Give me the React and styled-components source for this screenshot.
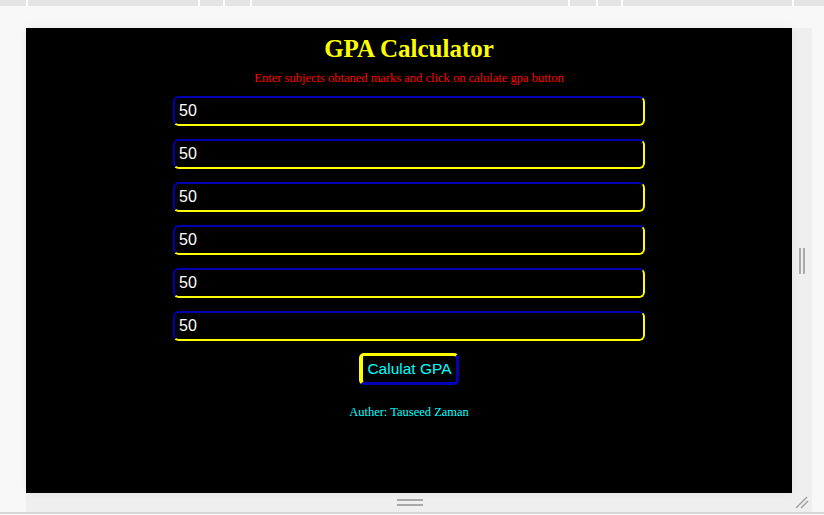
import React from 'react';
import styled, { createGlobalStyle } from 'styled-components';

const GlobalStyle = createGlobalStyle`
    html, body {
        margin: 0;
        padding: 0;
        background: #f8f8f8;
        overflow: hidden;
    }
`;

const TopBar = styled.div`
    display: flex;
    height: 6px;
    background: #e4e4e4;
`;

const Segment = styled.div`
    width: ${props => props.$w}px;
    flex-shrink: 0;
`;

const Tick = styled.div`
    width: 2px;
    background: #ffffff;
`;

const Workspace = styled.div`
    padding: 22px 0 0 26px;
`;

const Frame = styled.div`
    display: grid;
    grid-template-columns: 766px 20px;
    grid-template-rows: 465px 19px;
    width: 786px;
    background: #efefef;
`;

const Panel = styled.div`
    display: flex;
    flex-direction: column;
    align-items: center;
    padding-top: 7px;
    background: #000;
    box-shadow: 0 0 10px rgba(0, 0, 0, 0.05);
`;

const Title = styled.h1`
    margin: 0;
    font-family: "Liberation Serif", serif;
    font-size: 25px;
    line-height: 28px;
    font-weight: bold;
    color: #ffff00;
`;

const Subtitle = styled.p`
    margin: 7px 0 0;
    font-family: "Liberation Serif", serif;
    font-size: 12.5px;
    line-height: 16px;
    color: #ff0000;
`;

const Fields = styled.div`
    display: flex;
    flex-direction: column;
    gap: 13px;
    margin-top: 10px;
`;

const MarkInput = styled.input`
    box-sizing: border-box;
    width: 472px;
    height: 30px;
    padding: 0 4px;
    border: 2px solid;
    border-color: #0000b4 #ffff00 #ffff00 #0000b4;
    border-radius: 6px;
    background: #000;
    color: #fff;
    font-family: "Liberation Sans", Arial, sans-serif;
    font-size: 16px;
    outline: none;
`;

const CalcButton = styled.button`
    box-sizing: border-box;
    margin-top: 12px;
    width: 100px;
    height: 32px;
    padding: 0;
    border: 3px solid;
    border-color: #ffff00 #0000b4 #0000b4 #ffff00;
    border-width: 3px 3px 3px 4px;
    border-radius: 5px;
    background: #000;
    color: #00ffff;
    font-family: "Liberation Sans", Arial, sans-serif;
    font-size: 15.5px;
    cursor: pointer;
`;

const Author = styled.p`
    margin: 19px 0 0;
    font-family: "Liberation Serif", serif;
    font-size: 12.5px;
    line-height: 16px;
    color: #00ffff;
`;

const SideHandle = styled.div`
    display: flex;
    align-items: center;
    justify-content: center;
    gap: 2px;

    span {
        width: 2px;
        height: 26px;
        background: #a9a9a9;
    }
`;

const BottomHandle = styled.div`
    display: flex;
    flex-direction: column;
    align-items: center;
    justify-content: center;
    gap: 3px;
    padding-left: 2px;

    span {
        width: 26px;
        height: 2px;
        background: #a9a9a9;
    }
`;

const Corner = styled.div`
    display: flex;
    align-items: center;
    justify-content: center;
`;

const BottomRule = styled.div`
    height: 2px;
    background: #d6d6d6;
`;

const Rest = styled.div`
    height: 1px;
    background: #fff;
`;

const ticks = [26, 170, 23, 25, 316, 26, 23, 169, 30];
const marks = [50, 50, 50, 50, 50, 50];

export default function App() {
    return (
        <>
            <GlobalStyle />
            <TopBar>
                {ticks.map((w, i) => (
                    <React.Fragment key={i}>
                        <Segment $w={w} />
                        {i < ticks.length - 1 && <Tick />}
                    </React.Fragment>
                ))}
            </TopBar>
            <Workspace>
                <Frame>
                    <Panel>
                        <Title>GPA Calculator</Title>
                        <Subtitle>Enter subjects obtaned marks and click on calulate gpa button</Subtitle>
                        <Fields>
                            {marks.map((m, i) => (
                                <MarkInput key={i} type="text" defaultValue={m} />
                            ))}
                        </Fields>
                        <CalcButton>Calulat GPA</CalcButton>
                        <Author>Auther: Tauseed Zaman</Author>
                    </Panel>
                    <SideHandle>
                        <span />
                        <span />
                    </SideHandle>
                    <BottomHandle>
                        <span />
                        <span />
                    </BottomHandle>
                    <Corner>
                        <svg width="14" height="13" viewBox="0 0 14 13">
                            <line x1="1" y1="12" x2="12" y2="1" stroke="#a0a0a0" strokeWidth="1.5" />
                            <line x1="6" y1="12" x2="13" y2="5" stroke="#a0a0a0" strokeWidth="1.5" />
                        </svg>
                    </Corner>
                </Frame>
            </Workspace>
            <BottomRule />
            <Rest />
        </>
    );
}
